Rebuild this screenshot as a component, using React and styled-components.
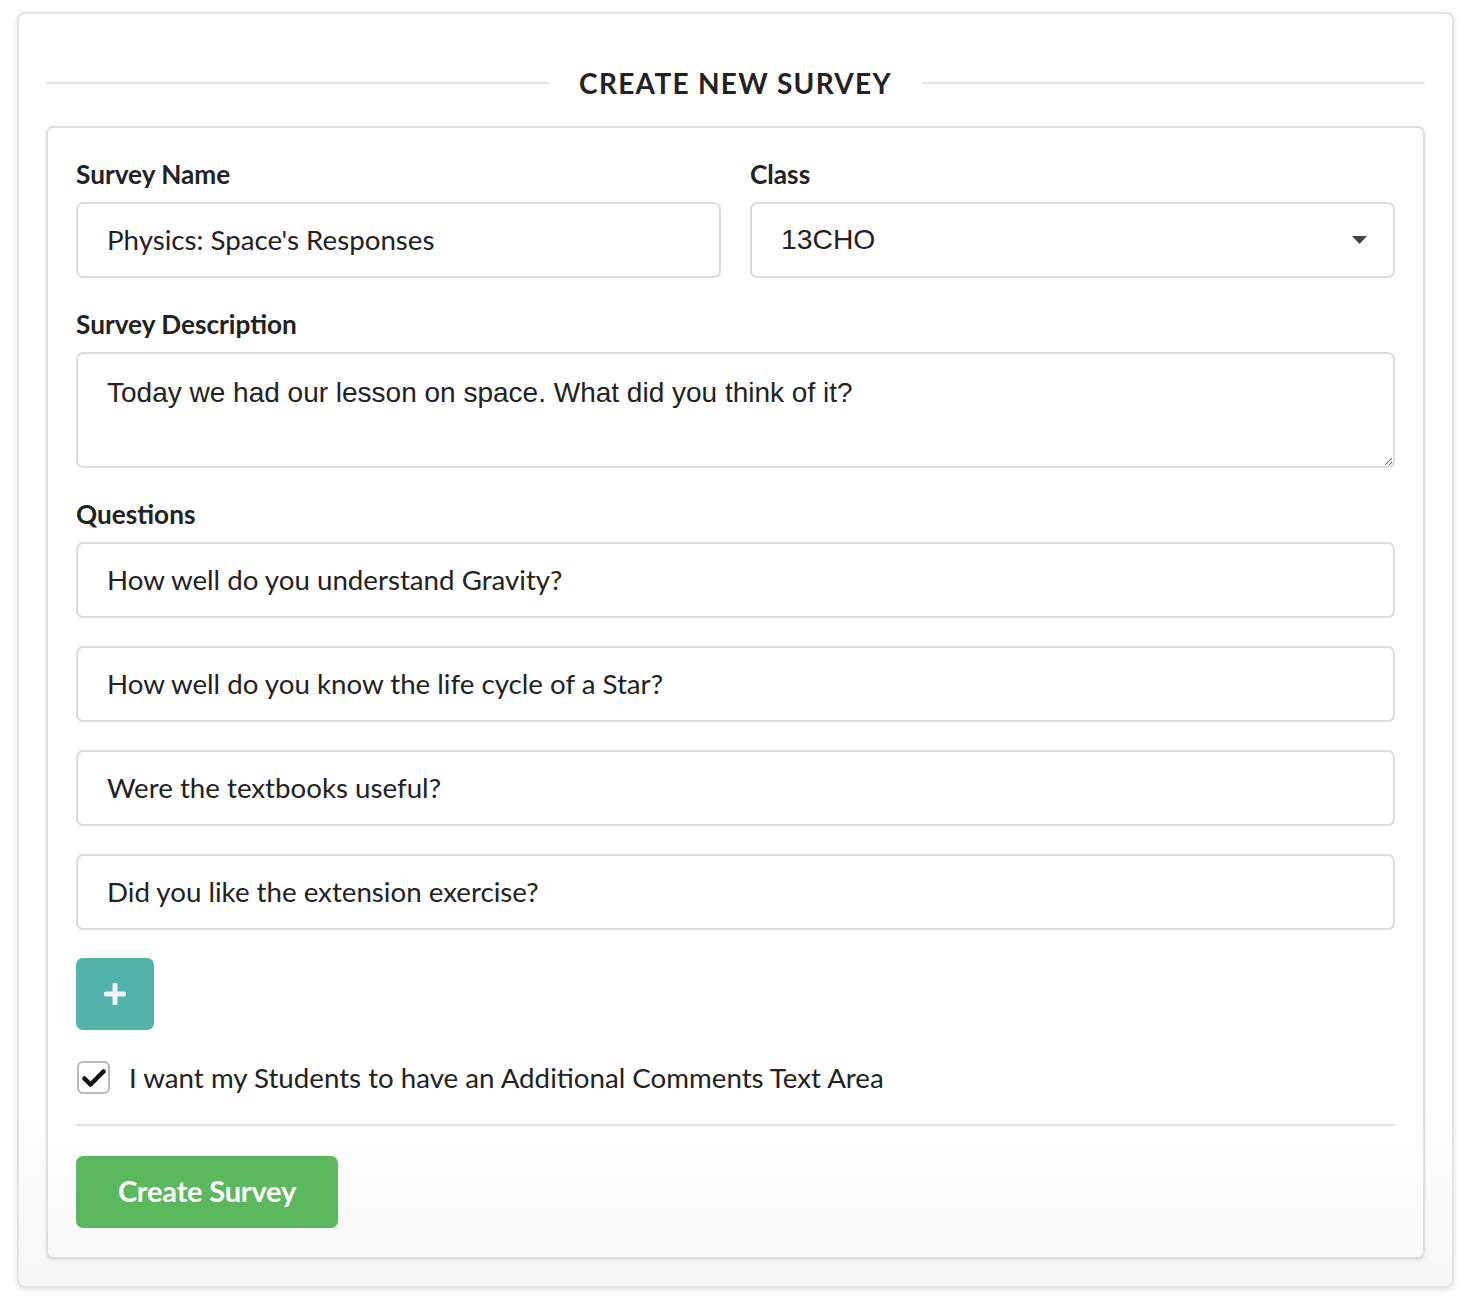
import styled, { createGlobalStyle } from 'styled-components';

const GlobalStyle = createGlobalStyle`
  html, body {
    margin: 0;
    padding: 0;
    background: #ffffff;
  }
  * { box-sizing: border-box; }
`;

const Page = styled.div`
  padding: 12px 16px 12px 17px;
  font-family: 'Lato', 'Liberation Sans', sans-serif;
  color: #222;
`;

const OuterCard = styled.div`
  border: 2px solid #e3e3e3;
  border-radius: 8px;
  background: linear-gradient(to bottom, #ffffff 85%, #f6f6f6 100%);
  box-shadow: 0 2px 6px rgba(0, 0, 0, 0.12);
  padding: 49px 27px 27px 27px;
`;

const Heading = styled.div`
  display: flex;
  align-items: center;
  gap: 30px;
  height: 40px;
  margin-bottom: 23px;

  &::before, &::after {
    content: '';
    flex: 1;
    height: 2px;
    background: #e4e4e4;
  }

  h1 {
    margin: 0;
    font-size: 28px;
    font-weight: 700;
    letter-spacing: 1.3px;
    color: #222;
    white-space: nowrap;
  }
`;

const InnerCard = styled.div`
  border: 2px solid #dedede;
  border-radius: 7px;
  background: linear-gradient(to bottom, #ffffff 88%, #f9f9f9 100%);
  box-shadow: 0 1px 3px rgba(0, 0, 0, 0.1);
  padding: 30px 28px 29px 28px;
  display: flex;
  flex-direction: column;
`;

const Row = styled.div`
  display: grid;
  grid-template-columns: 1fr 1fr;
  gap: 29px;
`;

const Field = styled.div`
  display: flex;
  flex-direction: column;
  margin-bottom: ${p => p.$last ? '0' : '30px'};
`;

const Label = styled.label`
  font-size: 26.2px;
  font-weight: 700;
  line-height: 32px;
  height: 34px;
  margin-bottom: 10px;
  color: #222;
`;

const TextInput = styled.input`
  height: 76px;
  width: 100%;
  border: 2px solid #dcdcdc;
  border-radius: 7px;
  padding: 0 28px 2px 29px;
  font-family: 'Lato', 'Liberation Sans', sans-serif;
  font-size: 27.7px;
  color: #222;
  background: #fff;
  outline: none;
`;

const SelectWrap = styled.div`
  position: relative;

  svg {
    position: absolute;
    right: 28px;
    top: 34px;
    pointer-events: none;
  }
`;

const Select = styled.select`
  appearance: none;
  -webkit-appearance: none;
  height: 76px;
  width: 100%;
  border: 2px solid #dcdcdc;
  border-radius: 7px;
  padding: 0 28px 2px 29px;
  font-family: 'Liberation Sans', 'Lato', sans-serif;
  font-size: 28.3px;
  color: #222;
  background: #fff;
  outline: none;
`;

const TextArea = styled.textarea`
  height: 116px;
  width: 100%;
  border: 2px solid #dcdcdc;
  border-radius: 7px;
  padding: 23px 29px;
  font-family: 'Liberation Sans', Arial, sans-serif;
  font-size: 28px;
  line-height: 32px;
  color: #222;
  background: #fff;
  outline: none;
  resize: vertical;
  display: block;
`;

const QuestionList = styled.div`
  display: flex;
  flex-direction: column;
  gap: 28px;
`;

const AddButton = styled.button`
  width: 78px;
  height: 72px;
  margin-top: 28px;
  border: none;
  border-radius: 7px;
  background: #52b3aa;
  display: flex;
  align-items: center;
  justify-content: center;
  cursor: pointer;
  padding: 0;
`;

const CheckRow = styled.label`
  display: flex;
  align-items: center;
  gap: 19px;
  margin-top: 31px;
  font-size: 27.7px;
  color: #222;
  cursor: pointer;
`;

const CheckBox = styled.span`
  width: 33px;
  height: 33px;
  border: 2px solid #b9b9b9;
  border-radius: 6px;
  background: #fff;
  display: flex;
  align-items: center;
  justify-content: center;
  margin-left: 1px;
`;

const Divider = styled.hr`
  border: none;
  height: 2px;
  background: #e2e2e2;
  margin: 30px 0 30px 0;
  width: 100%;
`;

const SubmitButton = styled.button`
  align-self: flex-start;
  width: 262px;
  height: 72px;
  border: none;
  border-radius: 7px;
  background: #5cb85c;
  color: #fff;
  font-family: 'Lato', 'Liberation Sans', sans-serif;
  font-size: 29px;
  font-weight: 700;
  letter-spacing: -0.2px;
  padding: 0 0 3px 0;
  cursor: pointer;
`;

const questions = [
  'How well do you understand Gravity?',
  'How well do you know the life cycle of a Star?',
  'Were the textbooks useful?',
  'Did you like the extension exercise?',
];

const App = () => {
  return (
    <>
      <GlobalStyle />
      <Page>
        <OuterCard>
          <Heading>
            <h1>CREATE NEW SURVEY</h1>
          </Heading>
          <InnerCard>
            <Row>
              <Field>
                <Label>Survey Name</Label>
                <TextInput defaultValue="Physics: Space's Responses" />
              </Field>
              <Field>
                <Label>Class</Label>
                <SelectWrap>
                  <Select defaultValue="13CHO">
                    <option value="13CHO">13CHO</option>
                  </Select>
                  <svg width="15" height="8" viewBox="0 0 15 8">
                    <path d="M0 0 H15 L7.5 8 Z" fill="#444" />
                  </svg>
                </SelectWrap>
              </Field>
            </Row>
            <Field>
              <Label>Survey Description</Label>
              <TextArea defaultValue="Today we had our lesson on space. What did you think of it?" />
            </Field>
            <Field $last>
              <Label>Questions</Label>
              <QuestionList>
                {questions.map((q) => (
                  <TextInput key={q} defaultValue={q} />
                ))}
              </QuestionList>
            </Field>
            <AddButton type="button">
              <svg width="22" height="22" viewBox="0 0 22 22">
                <path d="M11 2 V20 M2 11 H20" stroke="#e9f6f4" strokeWidth="5" strokeLinecap="round" />
              </svg>
            </AddButton>
            <CheckRow>
              <CheckBox>
                <svg width="24" height="20" viewBox="0 0 24 20">
                  <path d="M2.5 10.5 L8.5 16.5 L21.5 3.5" fill="none" stroke="#111" strokeWidth="4.5" strokeLinejoin="round" strokeLinecap="round" />
                </svg>
              </CheckBox>
              I want my Students to have an Additional Comments Text Area
            </CheckRow>
            <Divider />
            <SubmitButton type="button">Create Survey</SubmitButton>
          </InnerCard>
        </OuterCard>
      </Page>
    </>
  );
};

export default App;
